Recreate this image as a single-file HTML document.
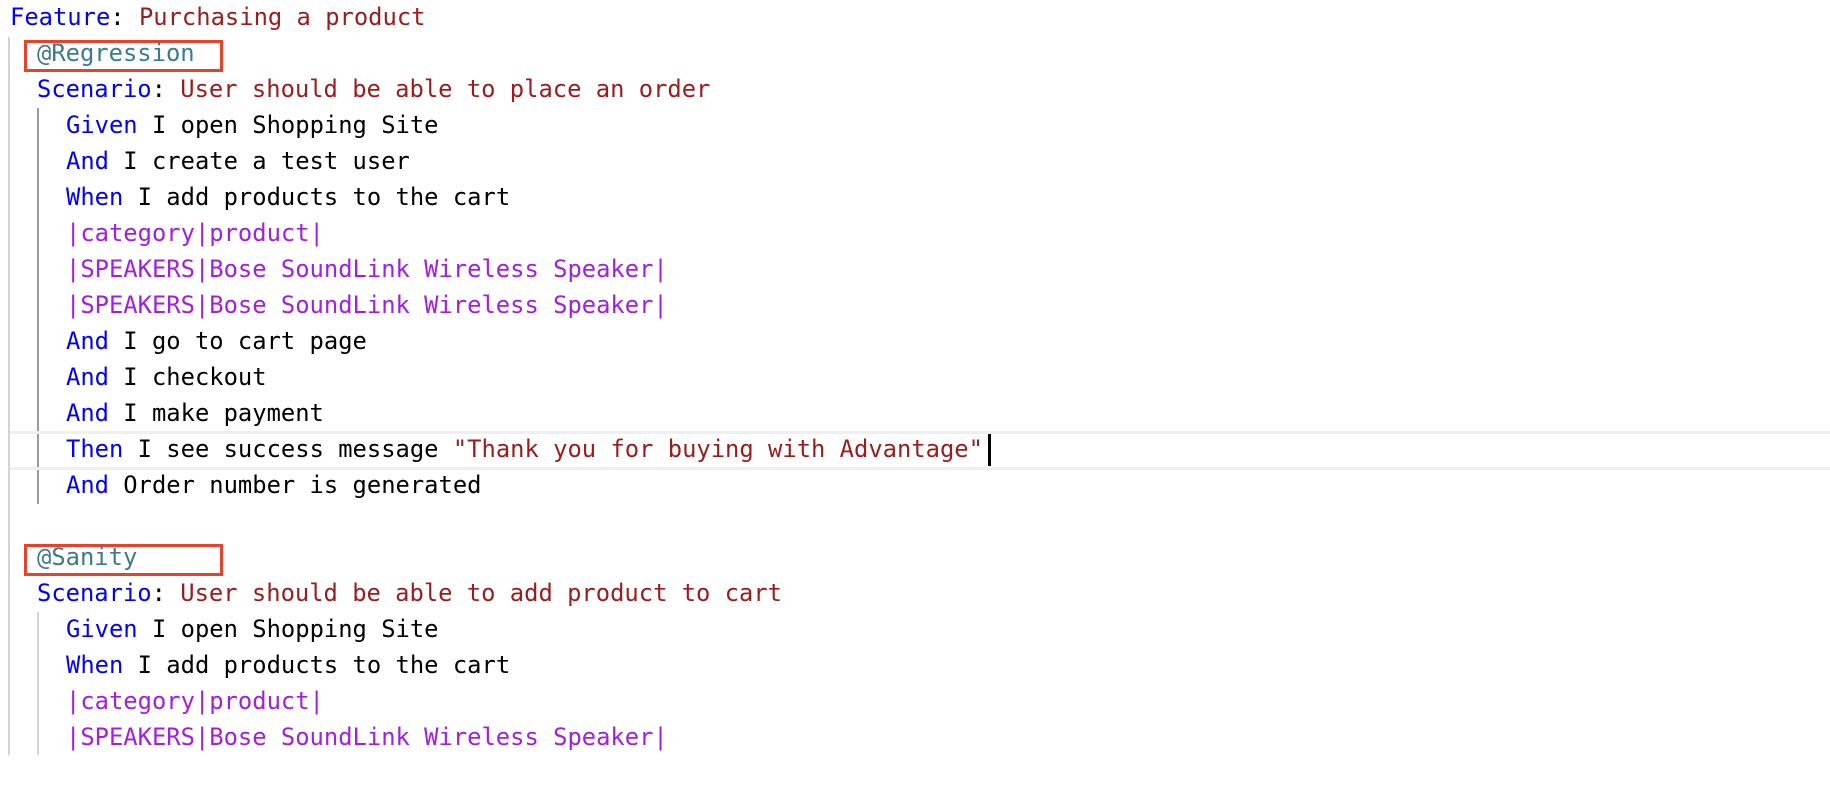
<!DOCTYPE html>
<html><head><meta charset="utf-8"><style>
html,body{margin:0;padding:0;background:#fff;width:1830px;height:808px;overflow:hidden}
body{position:relative;font-family:"DejaVu Sans Mono","Liberation Mono",monospace;font-size:23.8px;white-space:pre}
.l{position:absolute;height:36px;line-height:36px}
.k{color:#0000ff}.n{color:#9b1c1c}.t{color:#3a7b8f}.p{color:#a020e0}.s{color:#000}
.box{position:absolute;border:3px solid #e8432a;box-sizing:border-box}
.g{position:absolute;width:2px}
</style></head><body>
<div class="g" style="left:8px;top:37px;height:718px;background:#d4d4d4"></div>
<div class="g" style="left:37px;top:108px;height:396px;background:#9a9a9a"></div>
<div class="g" style="left:37px;top:612px;height:143px;background:#d4d4d4"></div>
<div style="position:absolute;left:10px;right:0;top:431px;height:33px;border-top:3px solid #efefef;border-bottom:3px solid #efefef"></div>
<div class="box" style="left:24px;top:40px;width:199px;height:32px"></div>
<div class="box" style="left:24px;top:544px;width:199px;height:32px"></div>

<div class="l" style="left:10px;top:-1px"><span class="k">Feature</span>: <span class="n">Purchasing a product</span></div>
<div class="l t" style="left:37px;top:35px">@Regression</div>
<div class="l" style="left:37px;top:71px"><span class="k">Scenario</span>: <span class="n">User should be able to place an order</span></div>
<div class="l" style="left:66px;top:107px"><span class="k">Given</span> I open Shopping Site</div>
<div class="l" style="left:66px;top:143px"><span class="k">And</span> I create a test user</div>
<div class="l" style="left:66px;top:179px"><span class="k">When</span> I add products to the cart</div>
<div class="l p" style="left:66px;top:215px">|category|product|</div>
<div class="l p" style="left:66px;top:251px">|SPEAKERS|Bose SoundLink Wireless Speaker|</div>
<div class="l p" style="left:66px;top:287px">|SPEAKERS|Bose SoundLink Wireless Speaker|</div>
<div class="l" style="left:66px;top:323px"><span class="k">And</span> I go to cart page</div>
<div class="l" style="left:66px;top:359px"><span class="k">And</span> I checkout</div>
<div class="l" style="left:66px;top:395px"><span class="k">And</span> I make payment</div>
<div class="l" style="left:66px;top:431px"><span class="k">Then</span> I see success message <span class="n">"Thank you for buying with Advantage"</span></div>
<div style="position:absolute;left:988px;top:434px;width:3px;height:32px;background:#000"></div>
<div class="l" style="left:66px;top:467px"><span class="k">And</span> Order number is generated</div>
<div class="l t" style="left:37px;top:539px">@Sanity</div>
<div class="l" style="left:37px;top:575px"><span class="k">Scenario</span>: <span class="n">User should be able to add product to cart</span></div>
<div class="l" style="left:66px;top:611px"><span class="k">Given</span> I open Shopping Site</div>
<div class="l" style="left:66px;top:647px"><span class="k">When</span> I add products to the cart</div>
<div class="l p" style="left:66px;top:683px">|category|product|</div>
<div class="l p" style="left:66px;top:719px">|SPEAKERS|Bose SoundLink Wireless Speaker|</div>
</body></html>
